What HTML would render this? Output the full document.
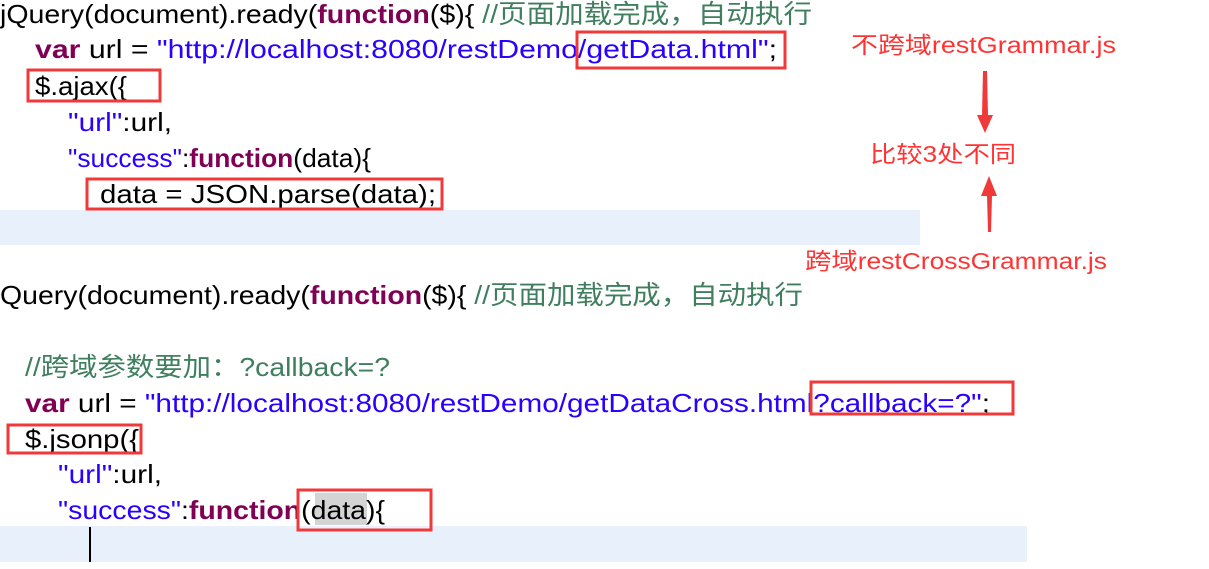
<!DOCTYPE html>
<html><head><meta charset="utf-8"><style>
html,body{margin:0;padding:0;background:#fff;width:1209px;height:569px;overflow:hidden}
svg{display:block}
text{font-family:"Liberation Sans","Noto Sans CJK SC",sans-serif;font-size:26px}
.k{fill:#7f0055;font-weight:bold}.s{fill:#2a00ff}.c{fill:#3f7f5f}
.a{fill:#ff3333;font-size:23px}
</style></head><body>
<svg width="1209" height="569" xmlns="http://www.w3.org/2000/svg">
<rect x="0" y="210" width="920" height="35" fill="#e8f0fb"/>
<rect x="0" y="526" width="1027" height="36" fill="#e8f0fb"/>
<rect x="315" y="493" width="52" height="32" fill="#d4d4d4"/>
<rect x="89" y="527" width="2" height="35" fill="#000"/>

<text x="0" y="23" textLength="812" lengthAdjust="spacingAndGlyphs">jQuery(document).ready(<tspan class="k">function</tspan>($){ <tspan class="c">//页面加载完成，自动执行</tspan></text>
<text x="35" y="58" textLength="742" lengthAdjust="spacingAndGlyphs"><tspan class="k">var</tspan> url = <tspan class="s">"http://localhost:8080/restDemo/getData.html"</tspan>;</text>
<text x="35" y="95" textLength="92" lengthAdjust="spacingAndGlyphs">$.ajax({</text>
<text x="68" y="131" textLength="104" lengthAdjust="spacingAndGlyphs"><tspan class="s">"url"</tspan>:url,</text>
<text x="68" y="167" textLength="303" lengthAdjust="spacingAndGlyphs"><tspan class="s">"success"</tspan>:<tspan class="k">function</tspan>(data){</text>
<text x="100" y="203" textLength="168" lengthAdjust="spacingAndGlyphs" style="display:none"></text>
<text x="100" y="203" textLength="336" lengthAdjust="spacingAndGlyphs">data = JSON.parse(data);</text>

<text x="0" y="304" textLength="803" lengthAdjust="spacingAndGlyphs">Query(document).ready(<tspan class="k">function</tspan>($){ <tspan class="c">//页面加载完成，自动执行</tspan></text>
<text x="25" y="376" textLength="365" lengthAdjust="spacingAndGlyphs" class="c">//跨域参数要加：?callback=?</text>
<text x="25" y="412" textLength="965" lengthAdjust="spacingAndGlyphs"><tspan class="k">var</tspan> url = <tspan class="s">"http://localhost:8080/restDemo/getDataCross.html?callback=?"</tspan>;</text>
<text x="25" y="448" textLength="114" lengthAdjust="spacingAndGlyphs">$.jsonp({</text>
<text x="58" y="483" textLength="104" lengthAdjust="spacingAndGlyphs"><tspan class="s">"url"</tspan>:url,</text>
<text x="58" y="519" textLength="327" lengthAdjust="spacingAndGlyphs"><tspan class="s">"success"</tspan>:<tspan class="k">function</tspan>(data){</text>

<g fill="none" stroke="#f03a3a" stroke-width="3">
<rect x="577" y="32" width="208" height="36"/>
<rect x="28" y="70" width="132" height="31"/>
<rect x="87" y="179" width="355" height="30"/>
<rect x="811" y="382" width="202" height="32"/>
<rect x="8" y="425" width="133" height="28"/>
<rect x="298" y="490" width="133" height="40"/>
</g>

<text class="a" x="851" y="53" textLength="265" lengthAdjust="spacingAndGlyphs">不跨域restGrammar.js</text>
<text class="a" x="870" y="162" textLength="146" lengthAdjust="spacingAndGlyphs">比较3处不同</text>
<text class="a" x="805" y="269" textLength="302" lengthAdjust="spacingAndGlyphs">跨域restCrossGrammar.js</text>
<polygon points="983,71 987,71 988,115 993,115 985,133 977,115 982,115" fill="#f03a3a"/>
<polygon points="989,176 997,196 992,196 991,232 988,232 987,196 981,196" fill="#f03a3a"/>
</svg>
</body></html>
